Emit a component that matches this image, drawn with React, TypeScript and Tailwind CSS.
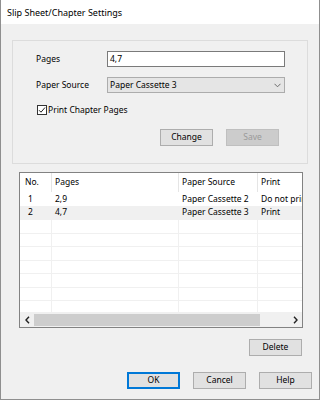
const rows = [
  { no: "1", pages: "2,9", source: "Paper Cassette 2", print: "Do not print" },
  { no: "2", pages: "4,7", source: "Paper Cassette 3", print: "Print" },
];

function Button({ label, primary, disabled }: { label: string; primary?: boolean; disabled?: boolean }) {
  let cls = "w-[53px] h-[17px] flex items-center justify-center border bg-[#e1e1e1] border-[#adadad] text-black";
  if (primary) cls = "w-[53px] h-[17px] flex items-center justify-center border-2 bg-[#e1e1e1] border-[#0078d7] text-black";
  if (disabled) cls = "w-[53px] h-[17px] flex items-center justify-center border bg-[#cccccc] border-[#bfbfbf] text-[#9a9a9a]";
  return <div className={cls}>{label}</div>;
}

export default function App() {
  const empty = Array.from({ length: 7 });

  return (
    <div className="w-[320px] h-[400px] flex flex-col border-x border-b border-[#8f8f8f] bg-[#f0f0f0] text-[8.5px] leading-none text-black font-['Noto_Sans',sans-serif] overflow-hidden">
      <div className="h-[24px] shrink-0 bg-white flex items-center pl-[6px] text-[9px]">Slip Sheet/Chapter Settings</div>

      {/* settings group */}
      <div className="ml-[11px] mt-[16px] w-[296px] h-[124px] shrink-0 border border-[#dcdcdc] pl-[23px] pt-[10px]">
        <div className="flex items-center">
          <div className="w-[71px]">Pages</div>
          <div className="w-[178px] h-[16px] border border-[#7a7a7a] bg-white pl-[2px] flex items-center">4,7</div>
        </div>
        <div className="flex items-center mt-[10px]">
          <div className="w-[71px]">Paper Source</div>
          <div className="w-[178px] h-[16px] border border-[#acacac] bg-[#e5e5e5] pl-[2px] pr-[3px] flex items-center justify-between">
            <span>Paper Cassette 3</span>
            <svg width="7" height="5" viewBox="0 0 7 5">
              <path d="M0.5 0.8 L3.5 3.8 L6.5 0.8" fill="none" stroke="#606060" strokeWidth="0.9" />
            </svg>
          </div>
        </div>
        <div className="flex items-center mt-[12px] ml-[1px]">
          <div className="w-[10px] h-[10px] border border-[#333333] bg-white flex items-center justify-center">
            <svg width="8" height="8" viewBox="0 0 8 8">
              <path d="M1 4.2 L3 6.2 L7 1.5" fill="none" stroke="#222222" strokeWidth="1" />
            </svg>
          </div>
          <span className="ml-[1px]">Print Chapter Pages</span>
        </div>
        <div className="flex justify-end gap-[13px] pr-[28px] mt-[14px]">
          <Button label="Change" />
          <Button label="Save" disabled />
        </div>
      </div>

      {/* list view */}
      <div className="ml-[18px] mt-[8px] w-[284px] h-[156px] shrink-0 border border-[#828282] bg-white flex flex-col overflow-hidden">
        <div className="h-[19px] shrink-0 flex items-center">
          <div className="w-[32px] h-full shrink-0 border-r border-[#e5e5e5] pl-[5px] flex items-center">No.</div>
          <div className="w-[127px] h-full shrink-0 border-r border-[#e5e5e5] pl-[3px] flex items-center">Pages</div>
          <div className="w-[79px] h-full shrink-0 border-r border-[#e5e5e5] pl-[3px] flex items-center">Paper Source</div>
          <div className="w-[80px] h-full shrink-0 pl-[3px] flex items-center">Print</div>
        </div>
        <div className="flex-1 overflow-hidden">
          {rows.map((r, i) => (
            <div key={r.no} className={i === 1 ? "h-[13.5px] flex bg-[#f0f0f0] whitespace-nowrap" : "h-[13.5px] flex whitespace-nowrap"}>
              <div className="w-[32px] shrink-0 pl-[8px] flex items-center">{r.no}</div>
              <div className="w-[127px] shrink-0 pl-[3px] flex items-center">{r.pages}</div>
              <div className="w-[79px] shrink-0 pl-[3px] flex items-center">{r.source}</div>
              <div className="w-[80px] shrink-0 pl-[3px] flex items-center">{r.print}</div>
            </div>
          ))}
          {empty.map((_, i) => (
            <div key={i} className="h-[13.5px] flex border-t border-[#f0f0f0]">
              <div className="w-[32px] shrink-0 border-r border-[#f0f0f0]" />
              <div className="w-[127px] shrink-0 border-r border-[#f0f0f0]" />
              <div className="w-[79px] shrink-0 border-r border-[#f0f0f0]" />
              <div className="w-[80px] shrink-0" />
            </div>
          ))}
        </div>
        <div className="h-[15px] shrink-0 bg-[#f0f0f0] flex items-center">
          <div className="w-[14px] h-full flex items-center justify-center">
            <svg width="5" height="8" viewBox="0 0 5 8">
              <path d="M4 0.8 L1 4 L4 7.2" fill="none" stroke="#222222" strokeWidth="1.4" />
            </svg>
          </div>
          <div className="w-[226px] h-[12px] bg-[#cdcdcd]" />
          <div className="flex-1" />
          <div className="w-[14px] h-full flex items-center justify-center">
            <svg width="5" height="8" viewBox="0 0 5 8">
              <path d="M1 0.8 L4 4 L1 7.2" fill="none" stroke="#222222" strokeWidth="1.4" />
            </svg>
          </div>
        </div>
      </div>

      <div className="self-end mr-[17px] mt-[11px]">
        <Button label="Delete" />
      </div>

      <div className="flex justify-end gap-[13px] mr-[7px] mt-[16px]">
        <Button label="OK" primary />
        <Button label="Cancel" />
        <Button label="Help" />
      </div>
    </div>
  );
}
